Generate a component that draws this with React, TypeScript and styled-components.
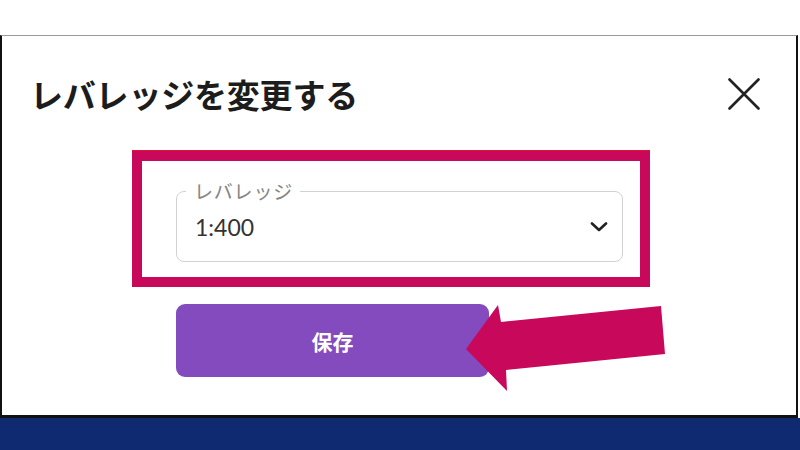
import React from "react";
import styled, { createGlobalStyle } from "styled-components";

const GlobalStyle = createGlobalStyle`
  html, body {
    margin: 0;
    padding: 0;
    background: #ffffff;
  }
  body {
    font-family: "Noto Sans CJK JP", "Noto Sans", sans-serif;
  }
`;

const Page = styled.div`
  position: relative;
  width: 800px;
  height: 450px;
  overflow: hidden;
  display: flex;
  flex-direction: column;
  background: #ffffff;
`;

const TopSpace = styled.div`
  height: 35px;
  flex: none;
`;

const Dialog = styled.section`
  box-sizing: border-box;
  width: 798px;
  height: 383px;
  flex: none;
  border: 2px solid #111111;
  border-top: 1px solid #9a9a9a;
  border-bottom: 3px solid #111111;
  box-shadow: 0 1px 0 #b8b8b8;
  display: flex;
  flex-direction: column;
`;

const Header = styled.header`
  display: flex;
  align-items: center;
  justify-content: space-between;
  padding: 38px 36px 0 28px;
  height: 40px;
`;

const Title = styled.h1`
  margin: 0;
  font-family: "Noto Sans CJK JP", sans-serif;
  font-size: 33px;
  line-height: 40px;
  font-weight: 600;
  color: #1c1c1c;
  letter-spacing: -0.2px;
`;

const CloseButton = styled.button`
  width: 32px;
  height: 32px;
  padding: 0;
  border: none;
  background: transparent;
  display: flex;
  align-items: center;
  justify-content: center;
  cursor: pointer;
`;

const Body = styled.div`
  display: flex;
  flex-direction: column;
  align-items: flex-start;
  margin-top: 37px;
  padding-left: 130px;
  gap: 17px;
`;

const Highlight = styled.div`
  box-sizing: border-box;
  width: 518px;
  height: 136px;
  border: 10px solid #c8085a;
  box-shadow: 0 -1px 0 #e8102c;
  padding: 21px 16px 0 34px;
`;

const Field = styled.fieldset`
  box-sizing: border-box;
  margin: 0;
  width: 447px;
  height: 80px;
  border: 1.5px solid #d2d2d2;
  border-radius: 8px;
  padding: 0 14px 0 9px;
  display: flex;
`;

const Legend = styled.legend`
  padding: 0 7px 0 8px;
  font-family: "Noto Sans CJK JP", sans-serif;
  font-size: 19px;
  line-height: 18px;
  font-weight: 400;
  color: #858585;
  letter-spacing: 0.8px;
`;

const ValueRow = styled.div`
  flex: 1;
  height: 54px;
  display: flex;
  align-items: center;
  justify-content: space-between;
  padding-left: 9px;
`;

const Value = styled.span`
  font-family: Lato, "Noto Sans", sans-serif;
  font-size: 23px;
  color: #333333;
`;

const SaveButton = styled.button`
  margin-left: 44px;
  width: 313px;
  height: 73px;
  border: none;
  border-radius: 9px;
  background: #844bbf;
  color: #ffffff;
  font-family: "Noto Sans CJK JP", sans-serif;
  font-size: 21px;
  font-weight: 700;
  cursor: pointer;
`;

const Footer = styled.div`
  flex: 1;
  background: #102a72;
`;

const Pointer = styled.svg`
  position: absolute;
  left: 0;
  top: 0;
  pointer-events: none;
`;

const CloseIcon = () => (
  <svg width="32" height="32" viewBox="0 0 32 32">
    <path d="M1.5 1.5 L30.5 30.5 M30.5 1.5 L1.5 30.5" stroke="#222222" strokeWidth="2.6" strokeLinecap="round" />
  </svg>
);

const Chevron = () => (
  <svg width="18" height="10" viewBox="0 0 18 10">
    <path d="M2 1.5 L9 8 L16 1.5" fill="none" stroke="#222222" strokeWidth="2.6" strokeLinecap="round" strokeLinejoin="round" />
  </svg>
);

export default function App() {
  return (
    <>
      <GlobalStyle />
      <Page>
        <TopSpace />
        <Dialog>
          <Header>
            <Title>レバレッジを変更する</Title>
            <CloseButton aria-label="閉じる">
              <CloseIcon />
            </CloseButton>
          </Header>
          <Body>
            <Highlight>
              <Field>
                <Legend>レバレッジ</Legend>
                <ValueRow>
                  <Value>1:400</Value>
                  <Chevron />
                </ValueRow>
              </Field>
            </Highlight>
            <SaveButton>保存</SaveButton>
          </Body>
        </Dialog>
        <Footer />
        <Pointer width="800" height="450" viewBox="0 0 800 450">
          <polygon
            points="466,349 498,305 501,322 661,306 665,354 506,370 507,391"
            fill="#c8085a"
          />
        </Pointer>
      </Page>
    </>
  );
}
